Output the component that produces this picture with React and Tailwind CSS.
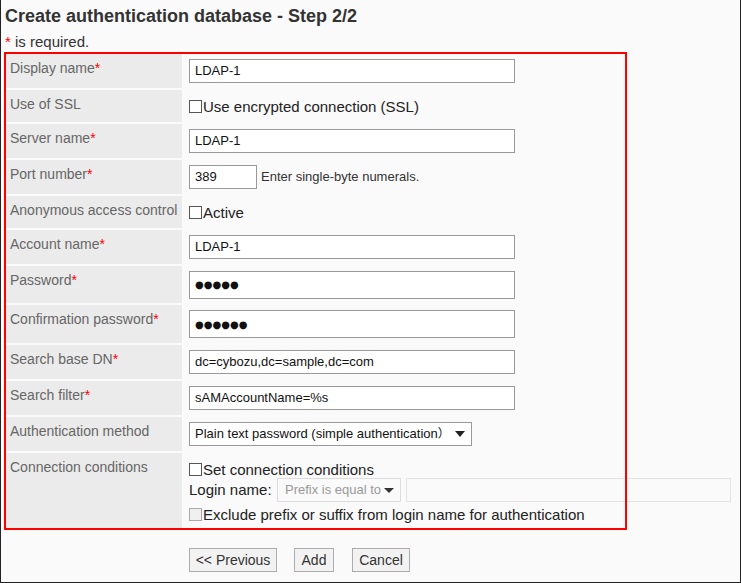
import React from "react";

const Req = () => <span className="text-[#ff0000]">*</span>;

function Label({ children, req }) {
  return (
    <div className="w-[176px] shrink-0 bg-[#ebebeb] pl-[4px] pt-[6px] text-[14px] leading-[16px] text-[#666666]">
      {children}
      {req && <Req />}
    </div>
  );
}

function TextBox({ value, w = "w-[326px]" }) {
  return (
    <div className={`${w} h-[24px] border border-[#999999] bg-white flex items-center pl-[5px] text-[13px] text-[#111111]`}>
      {value}
    </div>
  );
}

function PassBox({ dots }) {
  return (
    <div className="w-[326px] h-[28px] border border-[#999999] bg-white flex items-center pl-[5px] text-[10px] text-[#111111] font-['DejaVu_Sans',sans-serif]">
      {dots}
    </div>
  );
}

function Check({ label, disabled }) {
  return (
    <div className="flex items-center text-[15px] leading-[17px] text-[#222222] whitespace-nowrap">
      <span
        className={`w-[13px] h-[13px] shrink-0 border ${
          disabled ? "border-[#aaaaaa] bg-[#f0f0f0]" : "border-[#555555] bg-white"
        }`}
      />
      <span className="ml-[1px]">{label}</span>
    </div>
  );
}

function Row({ h, label, req, children, center = true }) {
  return (
    <div className={`flex ${h}`}>
      <Label req={req}>{label}</Label>
      <div className={`flex-1 ml-[2px] pl-[5px] flex ${center ? "items-center" : "flex-col"}`}>{children}</div>
    </div>
  );
}

export default function App() {
  return (
    <div className="relative w-[741px] h-[583px] bg-[#fafafa] border-x border-b border-[#222222] font-['Liberation_Sans',Arial,sans-serif] text-[#333333] overflow-hidden">
      <h1 className="pl-[4px] pt-[5px] text-[18px] leading-[22px] font-bold text-[#333333] whitespace-nowrap">
        Create authentication database - Step 2/2
      </h1>
      <div className="pl-[4px] mt-[7px] text-[15px] leading-[16px] text-[#333333]">
        <Req /> is required.
      </div>

      <div className="ml-[5px] mt-[4px] flex flex-col gap-[2px]">
        <Row h="h-[34px]" label="Display name" req>
          <TextBox value="LDAP-1" />
        </Row>
        <Row h="h-[32px]" label="Use of SSL">
          <Check label="Use encrypted connection (SSL)" />
        </Row>
        <Row h="h-[34px]" label="Server name" req>
          <TextBox value="LDAP-1" />
        </Row>
        <Row h="h-[34px]" label="Port number" req>
          <TextBox value="389" w="w-[68px]" />
          <span className="ml-[4px] text-[13px] text-[#333333]">Enter single-byte numerals.</span>
        </Row>
        <Row h="h-[32px]" label="Anonymous access control">
          <Check label="Active" />
        </Row>
        <Row h="h-[34px]" label="Account name" req>
          <TextBox value="LDAP-1" />
        </Row>
        <Row h="h-[37px]" label="Password" req>
          <PassBox dots="●●●●●" />
        </Row>
        <Row h="h-[38px]" label="Confirmation password" req>
          <PassBox dots="●●●●●●" />
        </Row>
        <Row h="h-[34px]" label="Search base DN" req>
          <TextBox value="dc=cybozu,dc=sample,dc=com" />
        </Row>
        <Row h="h-[34px]" label="Search filter" req>
          <TextBox value="sAMAccountName=%s" />
        </Row>
        <Row h="h-[34px]" label="Authentication method">
          <div className="w-[283px] h-[24px] border border-[#999999] bg-white flex items-center justify-between pl-[5px] pr-[6px] text-[13px] text-[#111111] whitespace-nowrap">
            <span>
              Plain text password (simple authentication
              <span className="font-['Noto_Sans_CJK_JP',sans-serif] text-[12px]">）</span>
            </span>
            <span className="w-0 h-0 border-l-[5px] border-r-[5px] border-t-[6px] border-l-transparent border-r-transparent border-t-[#222222]" />
          </div>
        </Row>
        <Row h="h-[75px]" label="Connection conditions" center={false}>
          <div className="pt-[7px] flex flex-col">
            <div className="h-[18px] flex items-center">
              <Check label="Set connection conditions" />
            </div>
            <div className="h-[24px] flex items-center">
              <span className="text-[15px] text-[#222222] w-[88px]">Login name:</span>
              <div className="w-[124px] h-[24px] border border-[#dddddd] bg-[#fafafa] flex items-center justify-between pl-[7px] pr-[6px] text-[13px] text-[#999999] whitespace-nowrap">
                <span>Prefix is equal to</span>
                <span className="w-0 h-0 border-l-[5px] border-r-[5px] border-t-[5px] border-l-transparent border-r-transparent border-t-[#333333]" />
              </div>
              <div className="ml-[5px] w-[325px] h-[24px] border border-[#e3e3e3] bg-[#fafafa]" />
            </div>
            <div className="mt-[3px] h-[18px] flex items-center">
              <Check label="Exclude prefix or suffix from login name for authentication" disabled />
            </div>
          </div>
        </Row>
      </div>

      <div className="mt-[20px] ml-[188px] flex items-center text-[14px] text-[#333333]">
        <button className="w-[88px] h-[24px] border border-[#adadad] bg-[#f2f2f2]">&lt;&lt; Previous</button>
        <button className="ml-[17px] w-[40px] h-[24px] border border-[#adadad] bg-[#f2f2f2]">Add</button>
        <button className="ml-[18px] w-[58px] h-[24px] border border-[#adadad] bg-[#f2f2f2]">Cancel</button>
      </div>

      <div className="absolute left-[3px] top-[52px] w-[623px] h-[478px] border-2 border-[#ff0000] pointer-events-none" />
    </div>
  );
}
